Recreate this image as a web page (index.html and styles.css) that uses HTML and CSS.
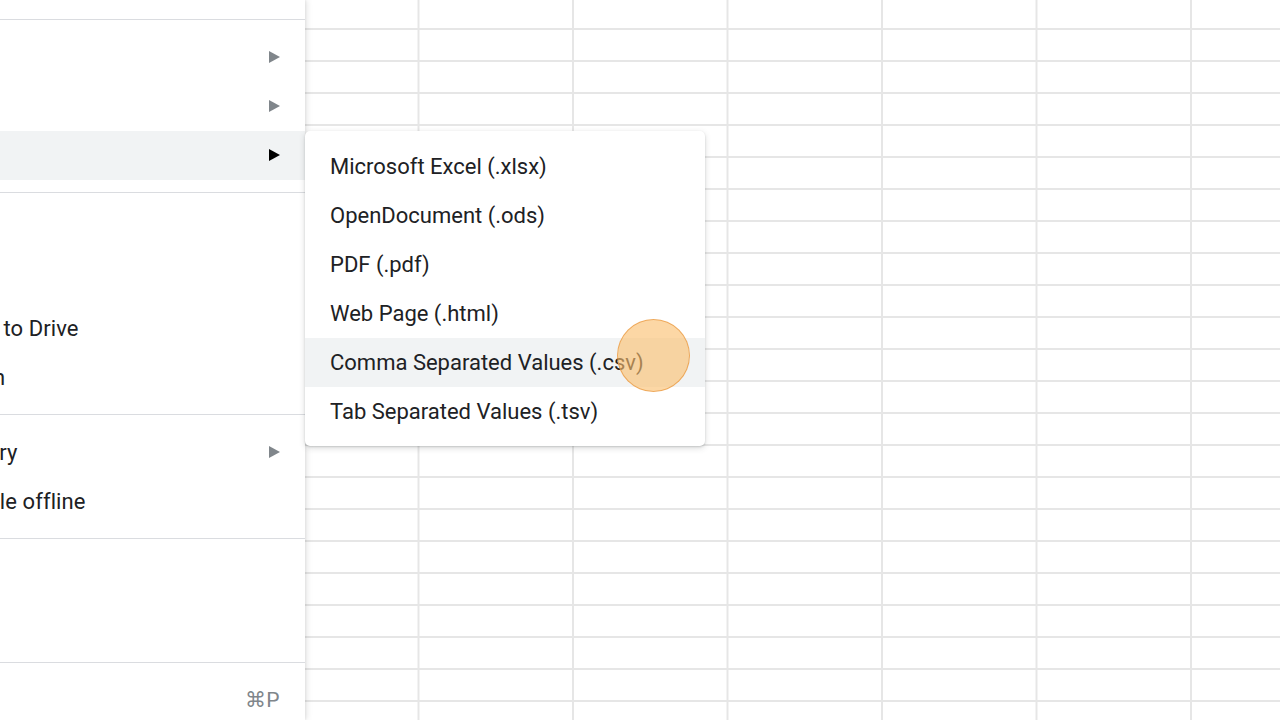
FILE: index.html
```html
<!DOCTYPE html>
<html lang="en">
<head>
<meta charset="utf-8">
<title>File menu – Download</title>
<link rel="stylesheet" href="styles.css">
</head>
<body>
<div class="app">
  <nav class="menu">
    <div class="sep"></div>
    <div class="item"><span class="label">Share</span><span class="arrow"></span></div>
    <div class="item"><span class="label">Email</span><span class="arrow"></span></div>
    <div class="item active"><span class="label">Download</span><span class="arrow"></span></div>
    <div class="sep"></div>
    <div class="item"><span class="label">Rename</span></div>
    <div class="item"><span class="label">Move</span></div>
    <div class="item"><span class="label">Add shortcut to Drive</span></div>
    <div class="item"><span class="label">Move to trash</span></div>
    <div class="sep"></div>
    <div class="item"><span class="label">Version history</span><span class="arrow"></span></div>
    <div class="item"><span class="label">Make available offline</span></div>
    <div class="sep"></div>
    <div class="item"><span class="label">Details</span></div>
    <div class="item"><span class="label">Settings</span></div>
    <div class="sep"></div>
    <div class="item"><span class="label">Print</span><span class="shortcut">⌘P</span></div>
  </nav>
  <main class="sheet"></main>

  <div class="submenu">
    <div class="sub-item">Microsoft Excel (.xlsx)</div>
    <div class="sub-item">OpenDocument (.ods)</div>
    <div class="sub-item">PDF (.pdf)</div>
    <div class="sub-item">Web Page (.html)</div>
    <div class="sub-item hover">Comma Separated Values (.csv)</div>
    <div class="sub-item">Tab Separated Values (.tsv)</div>
  </div>
  <div class="cursor"></div>
</div>
</body>
</html>
```

FILE: styles.css
```css
* { box-sizing: border-box; }

html, body {
  margin: 0;
  padding: 0;
  width: 1280px;
  height: 720px;
  overflow: hidden;
  background: #ffffff;
}

body {
  font-family: Roboto, "Liberation Sans", Arial, sans-serif;
  color: #202124;
}

.app {
  position: relative;
  display: flex;
  width: 1280px;
  height: 720px;
  overflow: hidden;
}

/* ---------- left (cropped) File menu ---------- */
.menu {
  position: relative;
  z-index: 2;
  flex: 0 0 505px;
  margin-left: -200px;
  padding-top: 7px;
  background: #ffffff;
  box-shadow: 2px 0 6px rgba(0, 0, 0, 0.10), 1px 0 2px rgba(0, 0, 0, 0.05);
}

.sep {
  height: 1px;
  margin: 12px 0 13px;
  background: #dadce0;
}

.item {
  display: flex;
  align-items: center;
  justify-content: space-between;
  height: 49px;
  padding: 0 25px 0 70px;
  font-size: 22px;
  line-height: 1;
  color: #202124;
}

.item .label { letter-spacing: 0.1px; }

.item.active { background: #f1f3f4; }

.arrow {
  width: 0;
  height: 0;
  margin-bottom: 1px;
  border-top: 6px solid transparent;
  border-bottom: 6px solid transparent;
  border-left: 11px solid #80868b;
}

.item.active .arrow { border-left-color: #000000; }

.shortcut {
  font-size: 21px;
  color: #80868b;
  letter-spacing: 0.5px;
}

/* ---------- spreadsheet grid ---------- */
.sheet {
  flex: 1 1 auto;
  height: 720px;
  background-color: #ffffff;
  background-image:
    linear-gradient(to right, transparent 152.5px, #e6e6e6 152.5px, #e6e6e6 154.5px),
    linear-gradient(to bottom, transparent 30px, #e6e6e6 30px, #e6e6e6 32px);
  background-size: 154.5px 100%, 100% 32px;
  background-position: -40px 0, 0 -2px;
}

/* ---------- Download submenu (overlay) ---------- */
.submenu {
  position: absolute;
  z-index: 3;
  left: 305px;
  top: 131px;
  width: 400px;
  padding: 11px 0 10px;
  background: #ffffff;
  border-radius: 5px;
  box-shadow: 0 2px 6px rgba(60, 64, 67, 0.18), 0 1px 2px rgba(60, 64, 67, 0.2);
}

.sub-item {
  display: flex;
  align-items: center;
  height: 49px;
  padding-left: 25px;
  font-size: 22px;
  color: #202124;
}

.sub-item.hover { background: #f1f3f4; }

/* ---------- click highlight ---------- */
.cursor {
  position: absolute;
  z-index: 4;
  left: 617px;
  top: 319px;
  width: 73px;
  height: 73px;
  border-radius: 50%;
  background: rgba(250, 190, 110, 0.62);
  border: 1.5px solid rgba(232, 150, 60, 0.7);
}
```
